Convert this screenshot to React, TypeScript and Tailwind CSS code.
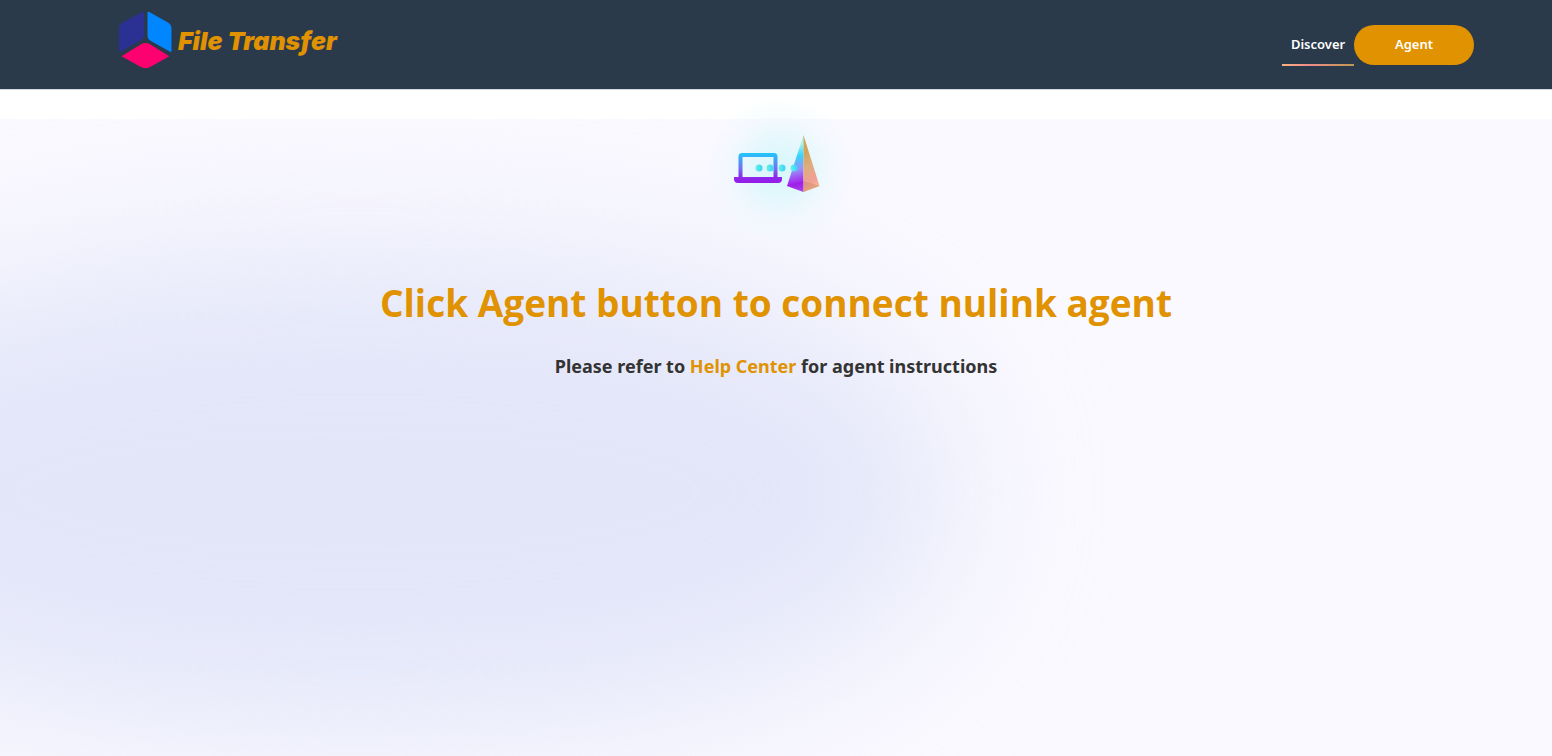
import React from 'react';

function Logo() {
  return (
    <svg className="w-[53px] h-[58px] shrink-0" viewBox="0 0 53 58" aria-hidden="true">
      <path d="M23.5 1Q25 .2 25 2V23.500Q25 27.500 21.500 29.600L1.800 40.600Q0 41.500 0 39.500V17.500Q0 13.500 3.500 11.500Z" fill="#2a3192" />
      <path d="M28.500 2Q28.500 0 30.300 1L48.500 11.300Q52.500 13.700 52.500 17.500V39.500Q52.500 41.500 50.700 40.600L31.500 29.800Q28.500 28 28.500 24.500Z" fill="#0086ff" />
      <path d="M2.500 45.200L22.500 33Q26.500 30.800 30.500 33L50.300 45.200L31.500 55.800Q26.500 58.500 21.500 55.800Z" fill="#ff0071" />
    </svg>
  );
}

function ConnectIcon() {
  return (
    <svg className="relative w-[88px] h-[57px]" viewBox="-2 0 88 57" aria-hidden="true">
      <defs>
        <linearGradient id="laptop" x1="0" y1="18" x2="0" y2="48" gradientUnits="userSpaceOnUse">
          <stop offset="0" stopColor="#1fc8fb" />
          <stop offset="0.5" stopColor="#6f72f5" />
          <stop offset="0.8" stopColor="#8d2aee" />
          <stop offset="1" stopColor="#951be6" />
        </linearGradient>
        <linearGradient id="dot" x1="0" y1="0" x2="1" y2="0">
          <stop offset="0" stopColor="#6bf0e4" />
          <stop offset="1" stopColor="#35d2ff" />
        </linearGradient>
        <linearGradient id="prismLeft" x1="60" y1="5" x2="70" y2="55" gradientUnits="userSpaceOnUse">
          <stop offset="0.1" stopColor="#a5f6ea" />
          <stop offset="0.32" stopColor="#35d5ff" />
          <stop offset="0.58" stopColor="#9a90fa" />
          <stop offset="0.85" stopColor="#a321ec" />
          <stop offset="1" stopColor="#b04cf0" />
        </linearGradient>
        <linearGradient id="prismRight" x1="68" y1="20" x2="84" y2="50" gradientUnits="userSpaceOnUse">
          <stop offset="0" stopColor="#d2a45f" />
          <stop offset="0.4" stopColor="#dfad7f" />
          <stop offset="0.8" stopColor="#f0a095" />
          <stop offset="1" stopColor="#f6b58c" />
        </linearGradient>
      </defs>
      <path
        fillRule="evenodd"
        fill="url(#laptop)"
        d="M8 18H40Q43.500 18 43.500 21.500V42H48V44Q48 48 44 48H4Q0 48 0 44V42H4.500V21.500Q4.500 18 8 18ZM8.500 22V42H39.500V22Z"
      />
      <path d="M69.500 0V57L53 51Z" fill="url(#prismLeft)" />
      <path d="M69.500 0L85.500 51L69.500 57Z" fill="url(#prismRight)" />
      <path d="M53 51L69.500 46V57Z" fill="#8c16dd" opacity="0.25" />
      <path d="M69.500 46L85.500 51L69.500 57Z" fill="#c07b62" opacity="0.35" />
      <circle cx="25" cy="33" r="3.500" fill="url(#dot)" />
      <circle cx="36" cy="33" r="3.500" fill="url(#dot)" />
      <circle cx="48" cy="33" r="3.500" fill="url(#dot)" />
      <circle cx="60" cy="33" r="3.500" fill="url(#dot)" />
    </svg>
  );
}

export default function App() {
  return (
    <div className="min-h-screen flex flex-col bg-white font-['Noto_Sans',sans-serif]">
      {/* Header */}
      <header className="h-[90px] shrink-0 bg-[#2b3a4b] border-b border-gray-300 pl-[119px] pr-[78px] flex items-start justify-between">
        <a href="#" className="flex items-center gap-1.5 pt-[11px]">
          <Logo />
          <span className="pt-0.5 font-['Inter',sans-serif] font-black italic text-[25px] leading-none text-[#e09200]">File Transfer</span>
        </a>
        <nav className="flex items-start pt-[25px]">
          <a href="#" className="w-[72px] text-center text-[13px] leading-[39px] font-semibold text-white">
            Discover
            <span className="block h-0.5 bg-linear-to-r from-[#ffb27d] via-[#f28c8c] via-35% to-[#bd9752]"></span>
          </a>
          <button type="button" className="w-[120px] h-10 rounded-full bg-[#e09200] text-[13px] font-semibold text-white">
            Agent
          </button>
        </nav>
      </header>

      {/* Content */}
      <main className="relative flex-1 mt-[29px] bg-[#faf9ff]">
        <div className="absolute inset-0 overflow-hidden">
          <div className="absolute left-[-15%] top-[21%] w-[76%] h-[75%] rounded-[45%] bg-[#e3e6f9] blur-[75px]"></div>
        </div>
        <div className="relative flex flex-col items-center text-center pt-4">
          <div className="relative">
            <div className="absolute -left-7 -right-9 -top-10 -bottom-13 bg-[radial-gradient(closest-side,#d6f7fb,#dcf7fcb3_40%,#e8f8fd59_70%,#f4f9ff00)]"></div>
            <ConnectIcon />
          </div>
          <h1 className="mt-[81px] text-[37px] leading-[60px] font-bold font-['Open_Sans',sans-serif] text-[#e09200]">Click Agent button to connect nulink agent</h1>
          <h3 className="mt-[19px] text-[18px] leading-7 font-bold text-[#333333]">
            Please refer to <a href="#" className="text-[#e09200]">Help Center</a> for agent instructions
          </h3>
        </div>
      </main>
    </div>
  );
}
